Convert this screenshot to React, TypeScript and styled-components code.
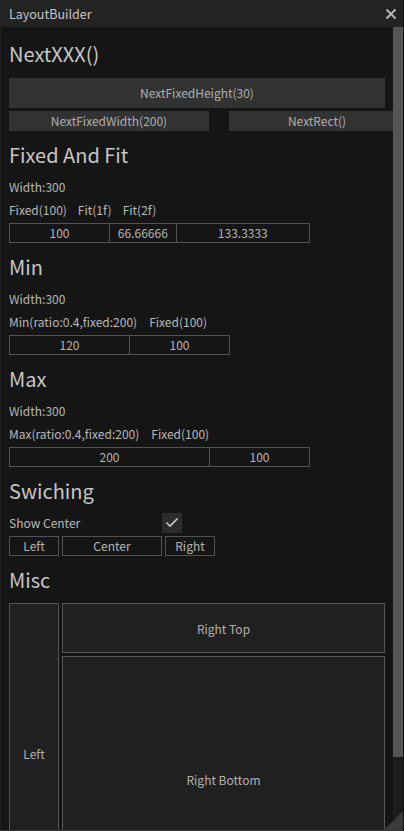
import React, { FC } from 'react';
import styled, { createGlobalStyle } from 'styled-components';

const GlobalStyle = createGlobalStyle`
  html, body {
    margin: 0;
    padding: 0;
    background: #151515;
  }
  body {
    font-family: "Noto Sans CJK JP", "Noto Sans", sans-serif;
    -webkit-font-smoothing: antialiased;
  }
`;

const Window = styled.div`
  position: relative;
  box-sizing: border-box;
  width: 404px;
  height: 831px;
  display: flex;
  flex-direction: column;
  background: #151515;
  border-left: 1px solid #202020;
  border-right: 1px solid #111;
  border-bottom: 1px solid #363636;
  overflow: hidden;
`;

const TitleBar = styled.div`
  flex: 0 0 27px;
  display: flex;
  align-items: center;
  justify-content: space-between;
  padding: 0 6px 0 8px;
  background: #232323;
  color: #c4c4c4;
  font-size: 12.5px;
`;

const CloseIcon = styled.svg`
  width: 12px;
  height: 12px;
`;

const Body = styled.div`
  flex: 1;
  display: flex;
  min-height: 0;
`;

const Content = styled.div`
  flex: 1;
  min-width: 0;
  padding: 14px 8px 0 8px;
  overflow: hidden;
  color: #b8b8b8;
  font-size: 12px;
`;

const ScrollTrack = styled.div`
  flex: 0 0 10px;
  background: #1c1c1c;
`;

const ScrollThumb = styled.div`
  height: 730px;
  background: #555555;
`;

const ResizeGrip = styled.svg`
  position: absolute;
  right: 0;
  bottom: 0;
  width: 19px;
  height: 19px;
`;

const Section = styled.section<{ $first?: boolean }>`
  display: flex;
  flex-direction: column;
  gap: 3px;
  margin-top: ${(p) => (p.$first ? '0' : '11px')};
`;

const Heading = styled.h2<{ $after?: number }>`
  margin: 0 0 ${(p) => p.$after ?? 6}px 0;
  height: 26px;
  line-height: 26px;
  font-size: 20px;
  font-weight: 400;
  color: #c6c6c6;
  white-space: nowrap;
`;

const Label = styled.div`
  height: 20px;
  line-height: 20px;
  white-space: nowrap;
`;

const LabelRow = styled.div<{ $gap: number }>`
  display: flex;
  gap: ${(p) => p.$gap}px;
  height: 20px;
  line-height: 20px;
  white-space: nowrap;
`;

const Row = styled.div<{ $gap?: number }>`
  display: flex;
  align-items: center;
  gap: ${(p) => p.$gap ?? 0}px;
`;

const Button = styled.div<{ $w?: number; $h: number }>`
  flex: none;
  width: ${(p) => (p.$w ? `${p.$w}px` : 'auto')};
  height: ${(p) => p.$h}px;
  display: flex;
  align-items: center;
  justify-content: center;
  background: #323232;
  color: #aeaeae;
  font-size: 12px;
  white-space: nowrap;
`;

const Cell = styled.div<{ $w: number }>`
  box-sizing: border-box;
  flex: 0 0 ${(p) => p.$w + 1}px;
  height: 20px;
  display: flex;
  align-items: center;
  justify-content: center;
  border: 1px solid #525252;
  color: #b4b4b4;
  white-space: nowrap;
  & + & {
    margin-left: -1px;
  }
`;

const Box = styled.div<{ $w: number }>`
  box-sizing: border-box;
  width: ${(p) => p.$w}px;
  height: 20px;
  display: flex;
  align-items: center;
  justify-content: center;
  border: 1px solid #525252;
  color: #b4b4b4;
`;

const ToggleRow = styled.div`
  display: flex;
  align-items: center;
  height: 20px;
  margin-top: 3px;
`;

const ToggleLabel = styled.span`
  width: 153px;
`;

const Checkbox = styled.div`
  width: 20px;
  height: 20px;
  background: #2c2c2c;
  display: flex;
  align-items: center;
  justify-content: center;
`;

const MiscGrid = styled.div`
  display: grid;
  grid-template-columns: 50px 1fr;
  grid-template-rows: 50px 247px;
  gap: 3px;
  margin-top: 1.5px;
`;

const Panel = styled.div<{ $span?: boolean }>`
  box-sizing: border-box;
  grid-row: ${(p) => (p.$span ? '1 / span 2' : 'auto')};
  display: flex;
  align-items: center;
  justify-content: center;
  background: #202020;
  border: 1px solid #565656;
  color: #b0b0b0;
`;

const ratioCells = [
  { w: 100, text: '100' },
  { w: 66.67, text: '66.66666' },
  { w: 133.33, text: '133.3333' },
];

const App: FC = () => {
  return (
    <>
      <GlobalStyle />
      <Window>
        <TitleBar>
          <span>LayoutBuilder</span>
          <CloseIcon viewBox="0 0 12 12">
            <path d="M1.5 1.5 L10.5 10.5 M10.5 1.5 L1.5 10.5" stroke="#b6b6b6" strokeWidth="2" />
          </CloseIcon>
        </TitleBar>
        <Body>
          <Content>
            <Section $first>
              <Heading $after={7.5}>NextXXX()</Heading>
              <Button $h={30}>NextFixedHeight(30)</Button>
              <Row $gap={20}>
                <Button $w={200} $h={20}>NextFixedWidth(200)</Button>
                <Button $w={176} $h={20}>NextRect()</Button>
              </Row>
            </Section>

            <Section>
              <Heading>Fixed And Fit</Heading>
              <Label>Width:300</Label>
              <LabelRow $gap={11}>
                <span>Fixed(100)</span>
                <span>Fit(1f)</span>
                <span>Fit(2f)</span>
              </LabelRow>
              <Row>
                {ratioCells.map((c) => (
                  <Cell key={c.text} $w={c.w}>{c.text}</Cell>
                ))}
              </Row>
            </Section>

            <Section>
              <Heading>Min</Heading>
              <Label>Width:300</Label>
              <LabelRow $gap={12}>
                <span>Min(ratio:0.4,fixed:200)</span>
                <span>Fixed(100)</span>
              </LabelRow>
              <Row>
                <Cell $w={120}>120</Cell>
                <Cell $w={100}>100</Cell>
              </Row>
            </Section>

            <Section>
              <Heading>Max</Heading>
              <Label>Width:300</Label>
              <LabelRow $gap={12}>
                <span>Max(ratio:0.4,fixed:200)</span>
                <span>Fixed(100)</span>
              </LabelRow>
              <Row>
                <Cell $w={200}>200</Cell>
                <Cell $w={100}>100</Cell>
              </Row>
            </Section>

            <Section>
              <Heading $after={3}>Swiching</Heading>
              <ToggleRow>
                <ToggleLabel>Show Center</ToggleLabel>
                <Checkbox>
                  <svg width="14" height="12" viewBox="0 0 14 12">
                    <path d="M1.5 5.5 L5 9 L12.5 1.5" fill="none" stroke="#cccccc" strokeWidth="1.6" />
                  </svg>
                </Checkbox>
              </ToggleRow>
              <Row $gap={3}>
                <Box $w={50}>Left</Box>
                <Box $w={100}>Center</Box>
                <Box $w={50}>Right</Box>
              </Row>
            </Section>

            <Section>
              <Heading $after={6}>Misc</Heading>
              <MiscGrid>
                <Panel $span>Left</Panel>
                <Panel>Right Top</Panel>
                <Panel>Right Bottom</Panel>
              </MiscGrid>
            </Section>
          </Content>
          <ScrollTrack>
            <ScrollThumb />
          </ScrollTrack>
        </Body>
        <ResizeGrip viewBox="0 0 19 19">
          <path d="M19 0 L19 19 L0 19 Z" fill="#3a3a3a" />
        </ResizeGrip>
      </Window>
    </>
  );
};

export default App;
